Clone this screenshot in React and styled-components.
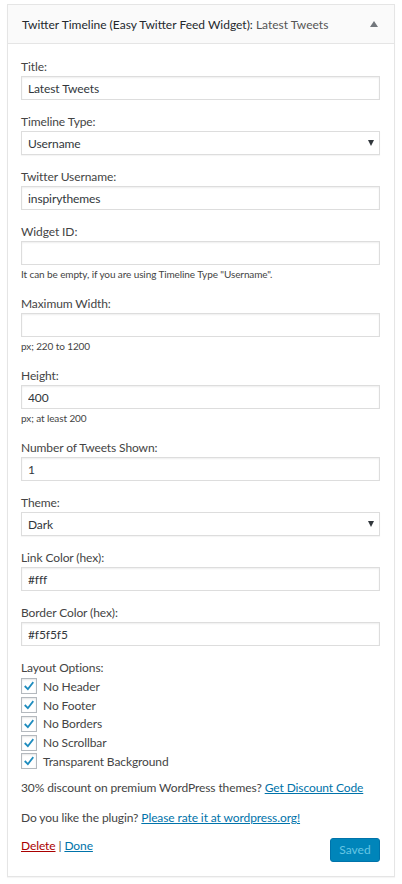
import React from "react";
import styled, { createGlobalStyle } from "styled-components";

const Global = createGlobalStyle`
  body {
    margin: 0;
    background: #fff;
    font-family: Lato, "Open Sans", sans-serif;
    font-size: 12px;
    letter-spacing: -0.1px;
    color: #444;
  }
`;

const Page = styled.div`
  padding: 4px 7px 8px 7px;
`;

const Widget = styled.div`
  border: 1px solid #e5e5e5;
  box-shadow: 0 1px 1px rgba(0, 0, 0, 0.04);
  background: #fff;
`;

const Top = styled.div`
  height: 38px;
  display: flex;
  align-items: center;
  justify-content: space-between;
  padding: 0 14px 0 14px;
  background: #fafafa;
  border-bottom: 1px solid #e5e5e5;
`;

const Heading = styled.h3`
  margin: 0;
  font-size: 12px;
  font-weight: 400;
  letter-spacing: 0;
  color: #23282d;
  white-space: nowrap;
`;

const InTitle = styled.span`
  color: #555;
`;

const Toggle = styled.span`
  width: 0;
  height: 0;
  border-left: 4px solid transparent;
  border-right: 4px solid transparent;
  border-bottom: 6px solid #72777c;
  margin-right: 2px;
`;

const Inside = styled.div`
  padding: 14px 14px 14px 13px;
`;

const Field = styled.div`
  margin-bottom: 13px;
`;

const Label = styled.label`
  display: block;
  line-height: 18px;
  color: #444;
`;

const Input = styled.input`
  display: block;
  box-sizing: border-box;
  width: 100%;
  height: 24px;
  margin: 0;
  padding: 0 6px;
  border: 1px solid #ddd;
  box-shadow: inset 0 1px 2px rgba(0, 0, 0, 0.07);
  background: #fff;
  color: #32373c;
  font-family: inherit;
  font-size: 12px;
  letter-spacing: -0.1px;
  outline: none;
`;

const SelectBox = styled.div`
  box-sizing: border-box;
  height: 24px;
  display: flex;
  align-items: center;
  justify-content: space-between;
  padding: 0 5px 0 6px;
  border: 1px solid #ddd;
  box-shadow: 0 1px 1px rgba(0, 0, 0, 0.04);
  color: #32373c;
`;

const Caret = styled.span`
  width: 0;
  height: 0;
  border-left: 3px solid transparent;
  border-right: 3px solid transparent;
  border-top: 6px solid #32373c;
`;

const Help = styled.div`
  margin-top: 2px;
  font-size: 10px;
  line-height: 15px;
  color: #444;
`;

const CheckRow = styled.div`
  display: flex;
  align-items: center;
  height: 18.75px;
  gap: 6px;
`;

const Box = styled.span`
  box-sizing: border-box;
  width: 16px;
  height: 16px;
  border: 1px solid #b4b9be;
  box-shadow: inset 0 1px 2px rgba(0, 0, 0, 0.1);
  display: flex;
  align-items: center;
  justify-content: center;
`;

const Note = styled.p`
  margin: ${(p) => p.$top}px 0 0;
  line-height: 18px;
  white-space: nowrap;
`;

const Link = styled.a`
  color: ${(p) => (p.$danger ? "#a00" : "#0073aa")};
  text-decoration: underline;
`;

const Actions = styled.div`
  margin-top: 11px;
  display: flex;
  justify-content: space-between;
  align-items: flex-start;
`;

const Saved = styled.button`
  width: 50px;
  height: 24px;
  padding: 0;
  border: 1px solid #0073aa;
  border-radius: 3px;
  background: #0085ba;
  color: #66c6e4;
  font-family: inherit;
  font-size: 12px;
`;

function Text({ label, value, help }) {
  return (
    <Field>
      <Label>{label}</Label>
      <Input defaultValue={value} />
      {help && <Help>{help}</Help>}
    </Field>
  );
}

function Select({ label, value }) {
  return (
    <Field>
      <Label>{label}</Label>
      <SelectBox>
        {value}
        <Caret />
      </SelectBox>
    </Field>
  );
}

function Check({ children }) {
  return (
    <CheckRow>
      <Box>
        <svg width="16" height="16" viewBox="0 0 20 20">
          <path
            d="M15.2 3.6 8.3 12.4 4.8 9 3 10.9 8.5 16.3 17.1 5.4z"
            fill="#1e8cbe"
          />
        </svg>
      </Box>
      {children}
    </CheckRow>
  );
}

const options = [
  "No Header",
  "No Footer",
  "No Borders",
  "No Scrollbar",
  "Transparent Background"
];

export default function App() {
  return (
    <Page>
      <Global />
      <Widget>
        <Top>
          <Heading>
            Twitter Timeline (Easy Twitter Feed Widget):{" "}
            <InTitle>Latest Tweets</InTitle>
          </Heading>
          <Toggle />
        </Top>
        <Inside>
          <Text label="Title:" value="Latest Tweets" />
          <Select label="Timeline Type:" value="Username" />
          <Text label="Twitter Username:" value="inspirythemes" />
          <Text
            label="Widget ID:"
            value=""
            help={'It can be empty, if you are using Timeline Type "Username".'}
          />
          <Text label="Maximum Width:" value="" help="px; 220 to 1200" />
          <Text label="Height:" value="400" help="px; at least 200" />
          <Text label="Number of Tweets Shown:" value="1" />
          <Select label="Theme:" value="Dark" />
          <Text label="Link Color (hex):" value="#fff" />
          <Text label="Border Color (hex):" value="#f5f5f5" />
          <Label>Layout Options:</Label>
          {options.map((o) => (
            <Check key={o}>{o}</Check>
          ))}
          <Note $top={8}>
            30% discount on premium WordPress themes?{" "}
            <Link href="#">Get Discount Code</Link>
          </Note>
          <Note $top={12}>
            Do you like the plugin?{" "}
            <Link href="#">Please rate it at wordpress.org!</Link>
          </Note>
          <Actions>
            <span>
              <Link href="#" $danger>
                Delete
              </Link>{" "}
              | <Link href="#">Done</Link>
            </span>
            <Saved>Saved</Saved>
          </Actions>
        </Inside>
      </Widget>
    </Page>
  );
}
